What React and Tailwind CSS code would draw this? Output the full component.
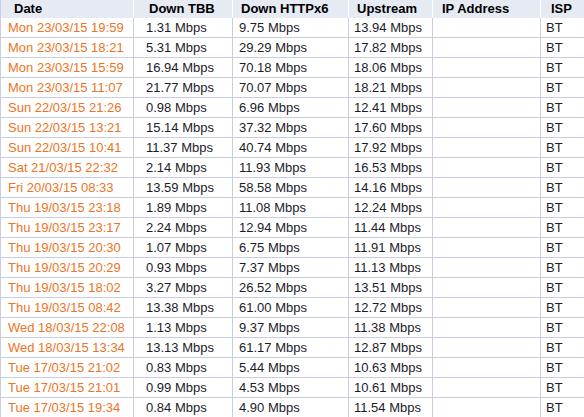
import React from "react";

const rows = [
  ["Mon 23/03/15 19:59", "1.31", "9.75", "13.94"],
  ["Mon 23/03/15 18:21", "5.31", "29.29", "17.82"],
  ["Mon 23/03/15 15:59", "16.94", "70.18", "18.06"],
  ["Mon 23/03/15 11:07", "21.77", "70.07", "18.21"],
  ["Sun 22/03/15 21:26", "0.98", "6.96", "12.41"],
  ["Sun 22/03/15 13:21", "15.14", "37.32", "17.60"],
  ["Sun 22/03/15 10:41", "11.37", "40.74", "17.92"],
  ["Sat 21/03/15 22:32", "2.14", "11.93", "16.53"],
  ["Fri 20/03/15 08:33", "13.59", "58.58", "14.16"],
  ["Thu 19/03/15 23:18", "1.89", "11.08", "12.24"],
  ["Thu 19/03/15 23:17", "2.24", "12.94", "11.44"],
  ["Thu 19/03/15 20:30", "1.07", "6.75", "11.91"],
  ["Thu 19/03/15 20:29", "0.93", "7.37", "11.13"],
  ["Thu 19/03/15 18:02", "3.27", "26.52", "13.51"],
  ["Thu 19/03/15 08:42", "13.38", "61.00", "12.72"],
  ["Wed 18/03/15 22:08", "1.13", "9.37", "11.38"],
  ["Wed 18/03/15 13:34", "13.13", "61.17", "12.87"],
  ["Tue 17/03/15 21:02", "0.83", "5.44", "10.63"],
  ["Tue 17/03/15 21:01", "0.99", "4.53", "10.61"],
  ["Tue 17/03/15 19:34", "0.84", "4.90", "11.54"],
];

const cols = "grid grid-cols-[133px_99px_116px_84px_108px_1fr]";
const cell = "border-r border-[#c9cde2] truncate";

function App() {
  return (
    <div
      className="w-[584px] h-[417px] overflow-hidden bg-white text-[13px] leading-[19px] text-[#1b1b2b]"
      style={{ fontFamily: '"Liberation Sans", Arial, sans-serif' }}
    >
      <div className="border-l border-[#c9cde2]">
        <div className={`${cols} h-[18px] bg-[#e6eaf3] font-bold text-black leading-[18px]`}>
          <div className="border-r border-white pl-[13px]">Date</div>
          <div className="border-r border-white pl-[15px]">Down TBB</div>
          <div className="border-r border-white pl-[8px]">Down HTTPx6</div>
          <div className="border-r border-white pl-[8px]">Upstream</div>
          <div className="border-r border-white pl-[9px]">IP Address</div>
          <div className="pl-[10px]">ISP</div>
        </div>
        {rows.map((r) => (
          <div key={r[0]} className={`${cols} h-[20px] border-b border-[#c9cde2]`}>
            <div className={`${cell} pl-[7px] text-[#ec7424]`}>{r[0]}</div>
            <div className={`${cell} pl-[12px]`}>{r[1]} Mbps</div>
            <div className={`${cell} pl-[6px]`}>{r[2]} Mbps</div>
            <div className={`${cell} pl-[5px]`}>{r[3]} Mbps</div>
            <div className={cell}></div>
            <div className="pl-[5px]">BT</div>
          </div>
        ))}
      </div>
    </div>
  );
}

export default App;
